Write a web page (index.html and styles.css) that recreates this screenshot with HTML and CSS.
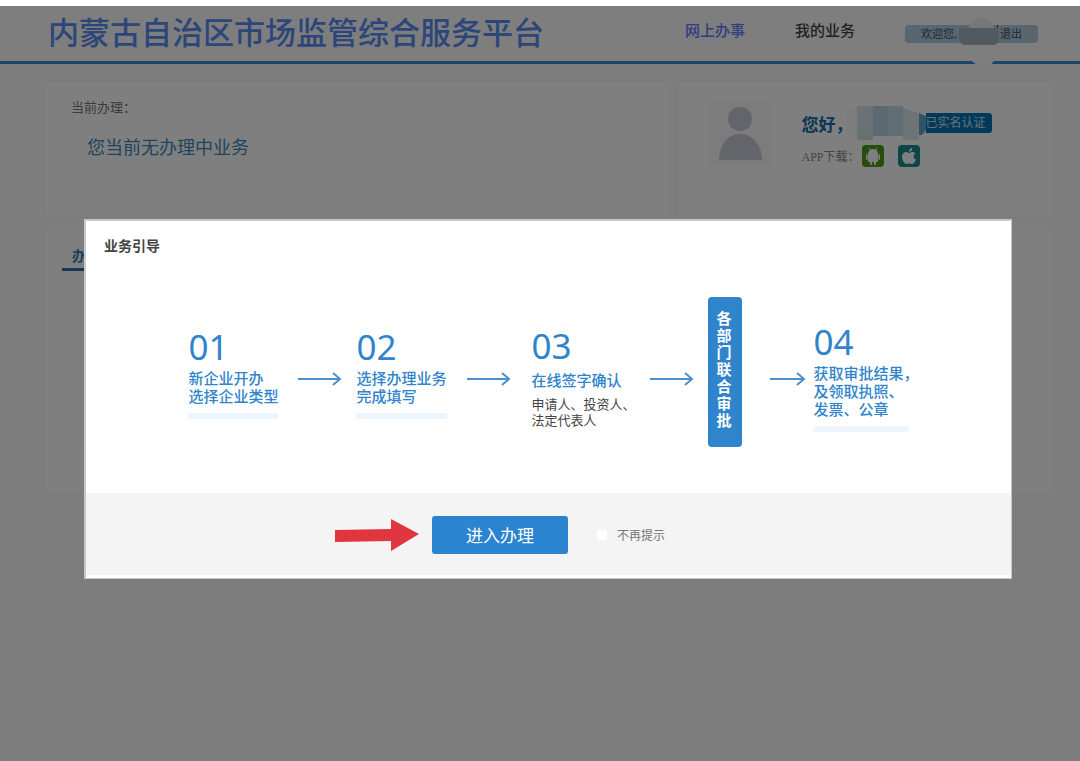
FILE: index.html
```html
<!DOCTYPE html>
<html lang="zh-CN">
<head>
  <meta charset="UTF-8" />
  <meta name="viewport" content="width=device-width, initial-scale=1.0"/>
  <title>内蒙古自治区市场监管综合服务平台</title>
  <link rel="stylesheet" href="styles.css">
</head>
<body>
  <div class="page">
    <header class="header">
      <h1>内蒙古自治区市场监管综合服务平台</h1>
      <nav class="nav">
        <a href="#" class="active">网上办事</a>
        <a href="#">我的业务</a>
      </nav>
      <div class="user-bar">
        <span>欢迎您,</span>
        <a href="#" class="logout">退出</a>
        <svg class="mask" width="48" height="48" viewBox="0 0 48 48" aria-hidden="true">
          <path d="M12 11C14 3 20 0 26 1s9 4 11 10z" fill="#f0f0f0"/>
          <path d="M2 11h40v14l-4 3H6l-4-4z" fill="#a3b4c2"/>
          <path d="M12 28h26v14l-4 6H20l-8-6z" fill="#fcfcfc"/>
        </svg>
      </div>
    </header>

    <main class="main">
      <div class="top">
        <section class="card current">
          <h2>当前办理&#65306;</h2>
          <p>您当前无办理中业务</p>
        </section>
        <section class="card profile">
          <svg class="avatar" width="64" height="64" viewBox="0 0 64 64" aria-hidden="true">
            <rect width="64" height="64" fill="#f8f8f9"/>
            <circle cx="32" cy="18" r="12" fill="#c5cad2"/>
            <path d="M11 59c0-15 9-26 21-26s22 11 22 26z" fill="#c5cad2"/>
          </svg>
          <div class="info">
            <div class="hello">
              <strong>您好&#65292;</strong>
              <svg width="82" height="36" viewBox="0 0 82 36" aria-hidden="true">
                <path d="M3 8l9-6h8v28H3z" fill="#f7f8f8"/>
                <path d="M13 1h16v33H13z" fill="#d3e4ea"/>
                <path d="M29 1h15v30H29z" fill="#b4d2e4"/>
                <path d="M44 1h15v30H44z" fill="#c3dce9"/>
                <path d="M59 3l16 5v27H59z" fill="#dce6ec"/>
                <path d="M14 30h15v5H14z" fill="#d0e4d4"/>
                <path d="M75 8l7 3v14l-4 5h-3z" fill="#64a6c8"/>
              </svg>
              <span class="badge">已实名认证</span>
            </div>
            <div class="download">
              <span>APP下载&#65306;</span>
              <a href="#" aria-label="Android">
                <svg width="22" height="22" viewBox="0 0 22 22">
                  <rect width="22" height="22" rx="4" fill="#4c9a18"/>
                  <g fill="#fff">
                    <path d="M6 9a5 5 0 0 1 10 0z"/>
                    <path d="M6 9h10v7a1 1 0 0 1-1 1H7a1 1 0 0 1-1-1z"/>
                    <rect x="4" y="9" width="1.500" height="6" rx=".7"/>
                    <rect x="16.500" y="9" width="1.500" height="6" rx=".7"/>
                    <rect x="8" y="15" width="2" height="5" rx="1"/>
                    <rect x="12" y="15" width="2" height="5" rx="1"/>
                  </g>
                  <path d="M8 5L7 3M14 5l1-2" stroke="#fff" stroke-width="1"/>
                </svg>
              </a>
              <a href="#" aria-label="iOS">
                <svg width="22" height="22" viewBox="0 0 22 22">
                  <rect width="22" height="22" rx="4" fill="#1c8a92"/>
                  <path d="M11 8c1-.3 2-1 3.300-1 1.300 0 2.400.6 3.100 1.600-2.600 1.600-2.200 5 .5 6-.7 2-2 4.400-3.800 4.400-1 0-1.600-.6-2.800-.6s-1.800.6-2.700.6C6.400 19 4 15 4 12c0-3.200 2-5 4-5 1.200 0 2.100.7 3 1z" fill="#fff"/>
                  <path d="M11 6.800C10.900 4.700 12.500 3 14.300 2.900 14.500 5 12.900 6.800 11 6.800z" fill="#fff"/>
                </svg>
              </a>
            </div>
          </div>
        </section>
      </div>
      <section class="card business">
        <a href="#" class="tab">办</a>
        <div class="business-list"></div>
      </section>
    </main>

    <div class="overlay">
      <div class="modal" role="dialog" aria-labelledby="guide-title">
        <h2 id="guide-title">业务引导</h2>

        <div class="steps">
          <div class="step">
            <div class="num">01</div>
            <p>新企业开办<br>选择企业类型</p>
            <div class="bar"></div>
          </div>
          <svg class="arrow" width="44" height="14" viewBox="0 0 44 14"><path d="M0 7h42M35 1l7 6-7 6"/></svg>
          <div class="step">
            <div class="num">02</div>
            <p>选择办理业务<br>完成填写</p>
            <div class="bar"></div>
          </div>
          <svg class="arrow" width="44" height="14" viewBox="0 0 44 14"><path d="M0 7h42M35 1l7 6-7 6"/></svg>
          <div class="step sign">
            <div class="num">03</div>
            <p>在线签字确认</p>
            <p class="sub">申请人、投资人、<br>法定代表人</p>
          </div>
          <svg class="arrow" width="44" height="14" viewBox="0 0 44 14"><path d="M0 7h42M35 1l7 6-7 6"/></svg>
          <div class="approve">各部门联合审批</div>
          <svg class="arrow last" width="36" height="14" viewBox="0 0 36 14"><path d="M0 7h34M27 1l7 6-7 6"/></svg>
          <div class="step result">
            <div class="num">04</div>
            <p>获取审批结果&#65292;<br>及领取执照、<br>发票、公章</p>
            <div class="bar"></div>
          </div>
        </div>

        <div class="modal-footer">
          <svg width="84" height="34" viewBox="0 0 84 34" aria-hidden="true">
            <path d="M0 12l56-1V1l28 15-28 17V23L0 24z" fill="#e03640"/>
          </svg>
          <button class="enter">进入办理</button>
          <label class="no-tip"><input type="checkbox"> 不再提示</label>
        </div>
      </div>
    </div>
  </div>
</body>
</html>
```
FILE: styles.css
```css
* {
  box-sizing: border-box;
}

body {
  margin: 0;
  padding-top: 6px;
  font-family: "Noto Sans", "Noto Sans CJK SC", sans-serif;
  background-color: #fff;
}

h1, h2, p {
  margin: 0;
}

a {
  text-decoration: none;
}

svg {
  display: block;
  flex-shrink: 0;
}

.page {
  position: relative;
  min-height: calc(100vh - 6px);
  background-color: #fafafa;
}

/* header */
.header {
  display: flex;
  align-items: center;
  gap: 50px;
  height: 58px;
  padding: 0 42px 0 48px;
  border-bottom: 3px solid #3c8cd0;
  background-color: #fcfcfc;
}

.header h1 {
  padding-bottom: 4px;
  font-size: 31px;
  font-weight: 500;
  line-height: 40px;
  color: #5a8cf4;
  white-space: nowrap;
}

.nav {
  display: flex;
  gap: 50px;
  margin-left: auto;
  font-size: 15px;
  font-weight: 500;
  line-height: 20px;
  padding-bottom: 8px;
}

.nav a {
  color: #444;
  white-space: nowrap;
}

.nav a.active {
  color: #6a78ff;
}

.user-bar {
  position: relative;
  display: flex;
  justify-content: space-between;
  align-items: center;
  width: 133px;
  padding: 0 16px;
  border-radius: 4px;
  background-color: #b4ccde;
  color: #35506a;
  font-size: 11px;
  line-height: 18px;
}

.user-bar a {
  color: #35506a;
}

.logout {
  padding-left: 2px;
  border-left: 1px solid #35506a;
}

.mask {
  position: absolute;
  left: 52px;
  top: -8px;
}

/* content */
.main {
  padding: 19px 28px 0 45px;
}

.card {
  background-color: #fff;
}

.top {
  display: grid;
  grid-template-columns: 5fr 3fr;
  gap: 11px;
  margin-bottom: 15px;
}

.current {
  min-height: 132px;
  padding: 14px 26px;
}

.current h2 {
  font-size: 13px;
  font-weight: normal;
  line-height: 20px;
  color: #777;
}

.current p {
  padding: 18px 16px;
  font-size: 18px;
  line-height: 24px;
  color: #4088c0;
}

.profile {
  display: flex;
  gap: 30px;
  padding: 18px 0 0 29px;
}

.hello {
  display: flex;
  align-items: center;
  height: 44px;
}

.hello strong {
  width: 42px;
  font-size: 17px;
  font-weight: bold;
  color: #0a6cae;
  white-space: nowrap;
}

.badge {
  padding-right: 6px;
  border-radius: 0 3px 3px 0;
  background-color: #0074b4;
  color: #cfe6f4;
  font-size: 12px;
  line-height: 20px;
  white-space: nowrap;
}

.download {
  display: flex;
  align-items: center;
  gap: 14px;
  font-family: "Liberation Serif", "Noto Sans CJK SC", serif;
  font-size: 12px;
  color: #888;
}

.download span {
  width: 46px;
  white-space: nowrap;
}

.business {
  min-height: 262px;
  padding: 14px 17px;
}

.tab {
  display: inline-block;
  width: 80px;
  padding: 0 10px;
  border-bottom: 3px solid #2f6fae;
  color: #3a7cb8;
  font-size: 14px;
  font-weight: bold;
  line-height: 24px;
}

.business-list {
  height: 150px;
  margin-top: 20px;
  background-color: #fdfdfd;
}

/* modal */
.overlay {
  position: absolute;
  top: 0;
  left: 0;
  right: 0;
  bottom: 0;
  padding: 213px 68px 0 84px;
  background-color: rgba(0, 0, 0, 0.5);
}

.modal {
  border: 2px solid #c8c8c8;
  border-right-width: 1px;
  border-bottom-width: 1px;
  padding-bottom: 3px;
  background-color: #fff;
}

.modal h2 {
  padding: 14px 18px 0;
  font-size: 14px;
  font-weight: bold;
  line-height: 22px;
  color: #444;
}

.steps {
  display: flex;
  justify-content: center;
  align-items: center;
  height: 236px;
  padding: 0 0 6px 10px;
}

.step {
  color: #2f84cc;
}

.num {
  font-size: 35px;
  line-height: 44px;
}

.step p {
  font-size: 15px;
  font-weight: 500;
  line-height: 18px;
  white-space: nowrap;
}

.step .sub {
  margin-top: 7px;
  font-size: 13px;
  font-weight: normal;
  line-height: 16px;
  color: #444;
}

.sign {
  width: 98px;
  margin-left: 7px;
  padding-top: 8px;
}

.sign .num {
  margin-bottom: 3px;
}

.result {
  padding-top: 8px;
}

.bar {
  height: 6px;
  margin-top: 8px;
  background-color: #edf5fd;
}

.result .bar {
  margin-right: 10px;
}

.arrow {
  margin: 14px 14px 0 20px;
  fill: none;
  stroke: #4a90cc;
  stroke-width: 2;
}

.arrow.last {
  margin: 14px 8px 0 28px;
}

.approve {
  width: 34px;
  height: 150px;
  padding: 13px 9px;
  border-radius: 4px;
  background-color: #2f84cc;
  color: #fff;
  font-size: 15px;
  font-weight: bold;
  line-height: 17px;
}

.modal-footer {
  display: flex;
  align-items: center;
  gap: 13px;
  height: 82px;
  padding: 2px 0 0 249px;
  background-color: #f4f4f4;
}

.enter {
  width: 136px;
  height: 38px;
  padding: 0 0 2px;
  border: none;
  border-radius: 3px;
  background-color: #2b84d0;
  color: #fff;
  font-family: inherit;
  font-size: 17px;
  cursor: pointer;
}

.no-tip {
  display: flex;
  align-items: center;
  gap: 10px;
  margin-left: 16px;
  font-size: 12px;
  color: #777;
}

.no-tip input {
  appearance: none;
  width: 10px;
  height: 10px;
  margin: 0;
  border-radius: 2px;
  background-color: #fff;
}
```
